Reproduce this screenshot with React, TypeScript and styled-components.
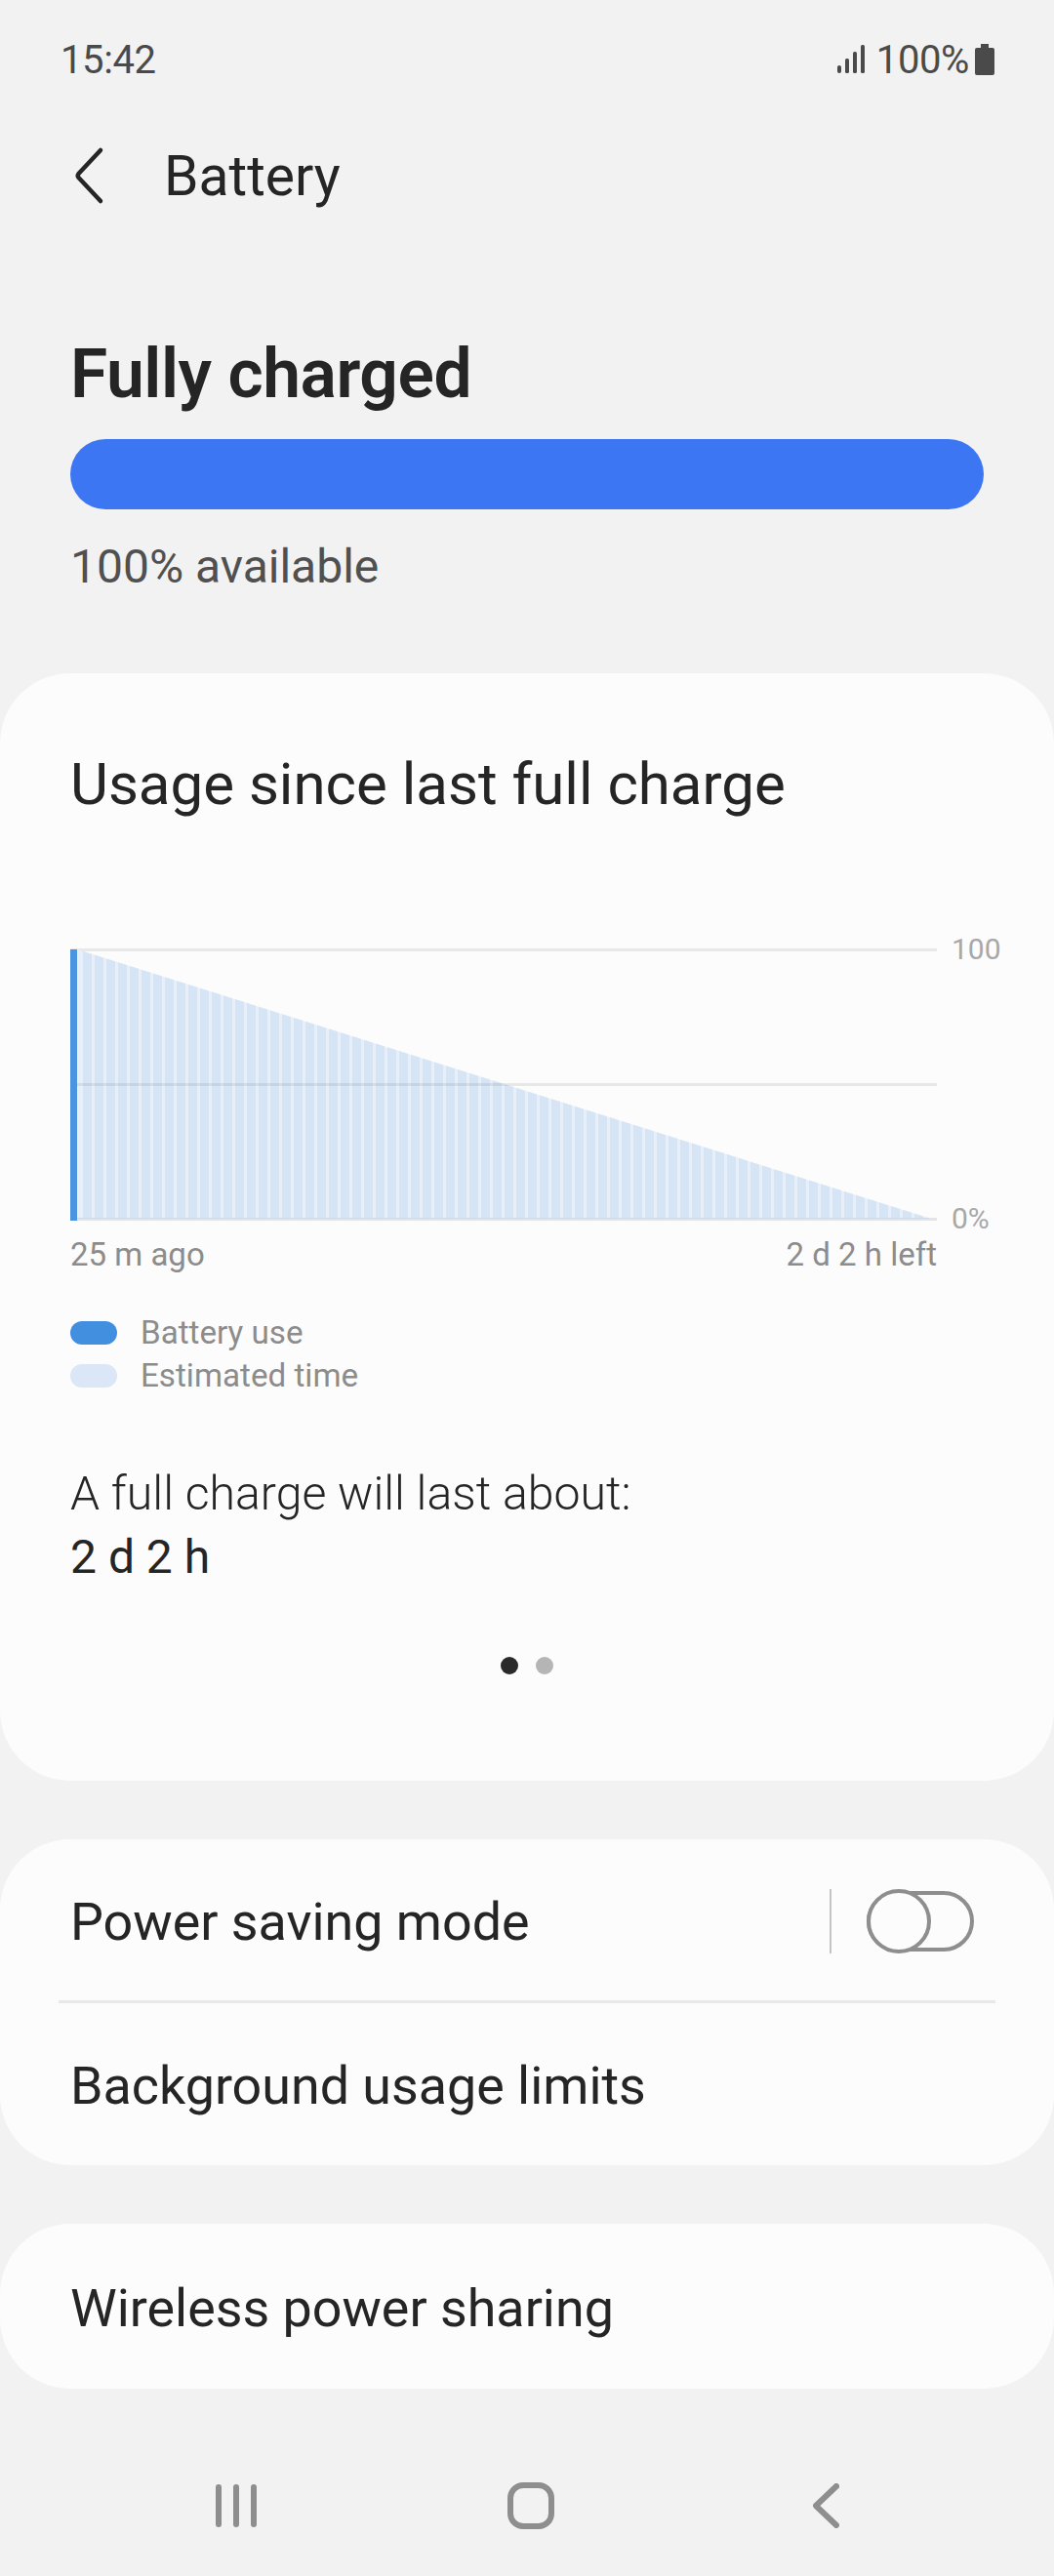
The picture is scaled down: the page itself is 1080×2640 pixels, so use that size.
import React from "react";
import styled, { createGlobalStyle } from "styled-components";

const Global = createGlobalStyle`
  html, body { margin: 0; padding: 0; background: #f2f2f2; }
  body { font-family: Roboto, "Noto Sans", sans-serif; }
`;

const Page = styled.div`
  width: 1080px;
  height: 2640px;
  background: #f2f2f2;
  display: flex;
  flex-direction: column;
  overflow: hidden;
  color: #252525;
`;

const StatusBar = styled.div`
  height: 120px;
  box-sizing: border-box;
  padding: 2px 61px 0 62px;
  display: flex;
  align-items: center;
  justify-content: space-between;
  color: #4a4a4a;
  font-size: 40px;
  letter-spacing: -0.4px;
`;

const StatusRight = styled.div`
  display: flex;
  align-items: center;
  gap: 6px;
`;

const SignalIcon = styled.svg`
  margin-right: 6px;
`;

const AppBar = styled.div`
  height: 120px;
  display: flex;
  align-items: center;
  padding-left: 74px;
  gap: 59px;
  font-size: 57px;
  color: #252525;
`;

const Summary = styled.div`
  padding: 104px 72px 0;
  height: 450px;
  box-sizing: border-box;
`;

const Headline = styled.div`
  font-size: 69.5px;
  font-weight: 600;
  line-height: 80px;
  letter-spacing: -0.45px;
`;

const BatteryBar = styled.div`
  height: 72px;
  margin-top: 26px;
  border-radius: 36px;
  background: #3d76f3;
`;

const Available = styled.div`
  margin-top: 31px;
  font-size: 48px;
  line-height: 56px;
  color: #505050;
`;

const Card = styled.div<{ $gap?: number }>`
  background: #fcfcfc;
  border-radius: 72px;
  margin-top: ${(p) => p.$gap ?? 60}px;
`;

const UsageCard = styled(Card)`
  height: 1135px;
  box-sizing: border-box;
  padding: 80px 72px 0;
  margin-top: 0;
`;

const CardTitle = styled.div`
  font-size: 60px;
  line-height: 68px;
  color: #252525;
`;

const ChartBox = styled.div`
  margin-top: 132px;
  position: relative;
  width: 960px;
  height: 280px;
`;

const AxisLabel = styled.span<{ $top: number }>`
  position: absolute;
  left: 903px;
  top: ${(p) => p.$top}px;
  font-size: 30px;
  line-height: 34px;
  color: #a8a8a8;
`;

const TimeRow = styled.div`
  width: 888px;
  display: flex;
  justify-content: space-between;
  font-size: 33px;
  line-height: 40px;
  color: #8c8c8c;
  margin-top: 16px;
`;

const Legend = styled.div`
  margin-top: 43px;
  display: flex;
  flex-direction: column;
  gap: 10px;
`;

const LegendRow = styled.div`
  display: flex;
  align-items: center;
  gap: 24px;
  font-size: 33.2px;
  line-height: 34px;
  color: #8c8c8c;
`;

const Swatch = styled.span<{ $color: string }>`
  width: 48px;
  height: 24px;
  border-radius: 12px;
  background: ${(p) => p.$color};
`;

const LastLabel = styled.div`
  margin-top: 71px;
  font-size: 48.2px;
  line-height: 65px;
  font-weight: 300;
  color: #252525;
`;

const LastValue = styled.div`
  font-size: 48px;
  line-height: 66px;
  color: #252525;
`;

const Dots = styled.div`
  margin-top: 69px;
  display: flex;
  justify-content: center;
  gap: 18px;
`;

const Dot = styled.span<{ $active?: boolean }>`
  width: 18px;
  height: 18px;
  border-radius: 50%;
  background: ${(p) => (p.$active ? "#2a2a2a" : "#b5b5b5")};
`;

const Row = styled.div<{ $height?: number; $top?: number }>`
  height: ${(p) => p.$height ?? 166}px;
  box-sizing: border-box;
  padding: ${(p) => p.$top ?? 2}px 72px 0;
  display: flex;
  align-items: center;
  font-size: 53.8px;
  color: #252525;
`;

const Rule = styled.div`
  height: 3px;
  margin: -1px 60px 0;
  background: #e8e8e8;
`;

const RowSwitchArea = styled.div`
  margin-left: auto;
  margin-right: -72px;
  padding-right: 82px;
  display: flex;
  align-items: center;
  gap: 36px;
`;

const VDivider = styled.span`
  width: 2px;
  height: 66px;
  background: #c4c4c4;
`;

const Toggle = styled.span`
  position: relative;
  display: block;
  width: 110px;
  height: 62px;
  box-sizing: border-box;
  border: 4px solid #8e8e8e;
  border-radius: 31px;
`;

const Knob = styled.span`
  position: absolute;
  left: -4px;
  top: -6px;
  width: 66px;
  height: 66px;
  box-sizing: border-box;
  border: 4px solid #8e8e8e;
  border-radius: 50%;
  background: #fcfcfc;
`;

const NavBar = styled.div`
  height: 128px;
  margin-top: 56px;
  display: grid;
  grid-template-columns: repeat(3, 302px);
  justify-content: center;
  justify-items: center;
  align-items: center;
  padding-left: 8px;
`;

const NavCell = styled.div`
  display: flex;
  justify-content: center;
`;

const bars = Array.from({ length: 73 }, (_, i) => 13 + i * 12);
const TOP = 3;
const BOTTOM = 279;
const W = 888;

function Chart() {
  return (
    <svg width="888" height="282" viewBox="0 0 888 282" style={{ display: "block" }}>
      <rect x="0" y="2" width="888" height="3" fill="#e8e8e8" />
      <rect x="0" y="140" width="888" height="3" fill="#e8e8e8" />
      <rect x="0" y="278" width="888" height="3" fill="#e4e4e4" />
      <polygon points={`7,${TOP} ${W - 6},${BOTTOM} 7,${BOTTOM}`} fill="#e6effa" />
      <clipPath id="slope">
        <polygon points={`7,${TOP} ${W - 6},${BOTTOM} 7,${BOTTOM}`} />
      </clipPath>
      <g clipPath="url(#slope)">
        {bars.map((x) => (
          <rect key={x} x={x} y="0" width="9" height="282" fill="#d6e5f6" />
        ))}
        <rect x="0" y="140" width="888" height="3" fill="#000" opacity="0.08" />
        <rect x="0" y="278" width="888" height="3" fill="#c9d6e6" opacity="0.8" />
      </g>
      <rect x="0" y="3" width="7" height="278" fill="#4a94e0" />
    </svg>
  );
}

const Back = ({ size = 70, color = "#252525", sw = 4.5 }: { size?: number; color?: string; sw?: number }) => (
  <svg width={size * 0.5} height={size} viewBox="0 0 35 70" fill="none">
    <path d="M29 9 L6.5 33 Q5 35 6.5 37 L29 61" stroke={color} strokeWidth={sw} strokeLinecap="round" strokeLinejoin="round" />
  </svg>
);

const App = () => (
  <Page>
    <Global />
    <StatusBar>
      <span>15:42</span>
      <StatusRight>
        <SignalIcon width="28" height="30" viewBox="0 0 28 30" fill="#4a4a4a">
          <rect x="0" y="21" width="4" height="8" rx="2" />
          <rect x="8" y="14" width="4" height="15" rx="1.5" />
          <rect x="16" y="7" width="4" height="22" rx="1.5" />
          <rect x="24" y="0" width="4" height="29" rx="1.5" />
        </SignalIcon>
        <span>100%</span>
        <svg width="20" height="32" viewBox="0 0 20 32" fill="#4a4a4a">
          <path d="M6 0h8v4h4a2 2 0 0 1 2 2v24a2 2 0 0 1-2 2H2a2 2 0 0 1-2-2V6a2 2 0 0 1 2-2h4z" />
        </svg>
      </StatusRight>
    </StatusBar>
    <AppBar>
      <Back />
      <span>Battery</span>
    </AppBar>
    <Summary>
      <Headline>Fully charged</Headline>
      <BatteryBar />
      <Available>100% available</Available>
    </Summary>
    <UsageCard>
      <CardTitle>Usage since last full charge</CardTitle>
      <ChartBox>
        <Chart />
        <AxisLabel $top={-14}>100</AxisLabel>
        <AxisLabel $top={262}>0%</AxisLabel>
      </ChartBox>
      <TimeRow>
        <span>25 m ago</span>
        <span>2 d 2 h left</span>
      </TimeRow>
      <Legend>
        <LegendRow>
          <Swatch $color="#428fe0" />
          Battery use
        </LegendRow>
        <LegendRow>
          <Swatch $color="#dbe6f7" />
          Estimated time
        </LegendRow>
      </Legend>
      <LastLabel>A full charge will last about:</LastLabel>
      <LastValue>2 d 2 h</LastValue>
      <Dots>
        <Dot $active />
        <Dot />
      </Dots>
    </UsageCard>
    <Card>
      <Row>
        Power saving mode
        <RowSwitchArea>
          <VDivider />
          <Toggle>
            <Knob />
          </Toggle>
        </RowSwitchArea>
      </Row>
      <Rule />
      <Row>Background usage limits</Row>
    </Card>
    <Card>
      <Row $height={169} $top={4}>Wireless power sharing</Row>
    </Card>
    <NavBar>
      <NavCell>
        <svg width="42" height="44" viewBox="0 0 42 44" fill="#8e8e8e">
          <rect x="0" y="0" width="6" height="44" rx="3" />
          <rect x="18" y="0" width="6" height="44" rx="3" />
          <rect x="36" y="0" width="6" height="44" rx="3" />
        </svg>
      </NavCell>
      <NavCell>
        <svg width="48" height="48" viewBox="0 0 48 48" fill="none">
          <rect x="3" y="3" width="42" height="42" rx="13" stroke="#8e8e8e" strokeWidth="6" />
        </svg>
      </NavCell>
      <NavCell>
        <svg width="27" height="46" viewBox="0 0 27 46" fill="none">
          <path d="M24 3 L3 23 L24 43" stroke="#8e8e8e" strokeWidth="6" strokeLinecap="round" strokeLinejoin="round" />
        </svg>
      </NavCell>
    </NavBar>
  </Page>
);

export default App;
